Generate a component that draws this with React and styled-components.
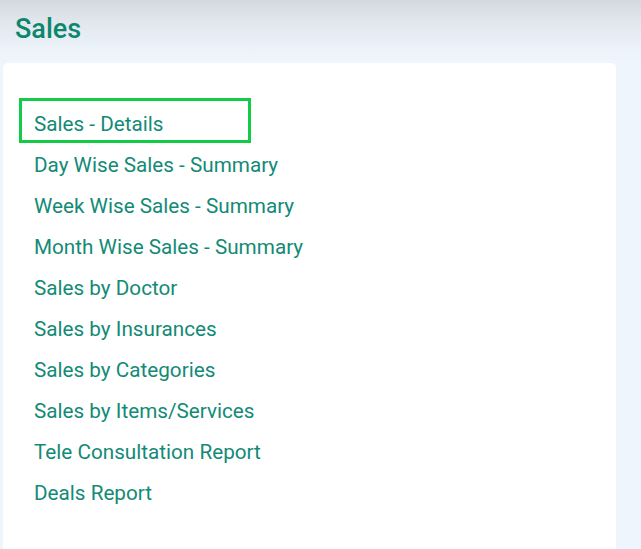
import styled, { createGlobalStyle } from 'styled-components';

const GlobalStyle = createGlobalStyle`
  html, body {
    margin: 0;
    padding: 0;
    background: #eef5fd;
    font-family: Roboto, "Liberation Sans", sans-serif;
  }
`;

const reports = [
  'Sales - Details',
  'Day Wise Sales - Summary',
  'Week Wise Sales - Summary',
  'Month Wise Sales - Summary',
  'Sales by Doctor',
  'Sales by Insurances',
  'Sales by Categories',
  'Sales by Items/Services',
  'Tele Consultation Report',
  'Deals Report',
];

const App = () => {
  return (
    <Page>
      <GlobalStyle />
      <Header>
        <h1>Sales</h1>
      </Header>
      <Card>
        <ReportList>
          {reports.map((name, i) => (
            <ReportItem key={name} $highlighted={i === 0}>
              <a href="#">{name}</a>
            </ReportItem>
          ))}
        </ReportList>
      </Card>
    </Page>
  );
};

const Page = styled.div`
  height: 549px;
  background: #eef5fd;
  overflow: hidden;
`;

const Header = styled.div`
  height: 63px;
  padding-left: 15px;
  box-sizing: border-box;
  background: linear-gradient(180deg, #d3d7df 0%, #e2e7ee 35%, #edf3fb 80%, #eef5fd 100%);

  h1 {
    margin: 0;
    padding-top: 13px;
    font-size: 27px;
    font-weight: 500;
    line-height: 32px;
    color: #0b876d;
  }
`;

const Card = styled.div`
  margin-left: 3px;
  width: 613px;
  min-height: 520px;
  background: #ffffff;
  border-radius: 5px;
  padding: 41px 0 40px 31px;
  box-sizing: border-box;
`;

const ReportList = styled.ul`
  list-style: none;
  margin: 0;
  padding: 0;
`;

const ReportItem = styled.li`
  position: relative;
  height: 41px;
  line-height: 41px;
  font-size: 20.7px;

  a {
    color: #138a76;
    text-decoration: none;
  }

  ${({ $highlighted }) =>
    $highlighted &&
    `
    &::after {
      content: '';
      position: absolute;
      left: -15px;
      top: -6px;
      width: 232px;
      height: 45px;
      box-sizing: border-box;
      border: 3px solid #12cb47;
      pointer-events: none;
    }
  `}
`;

export default App;
